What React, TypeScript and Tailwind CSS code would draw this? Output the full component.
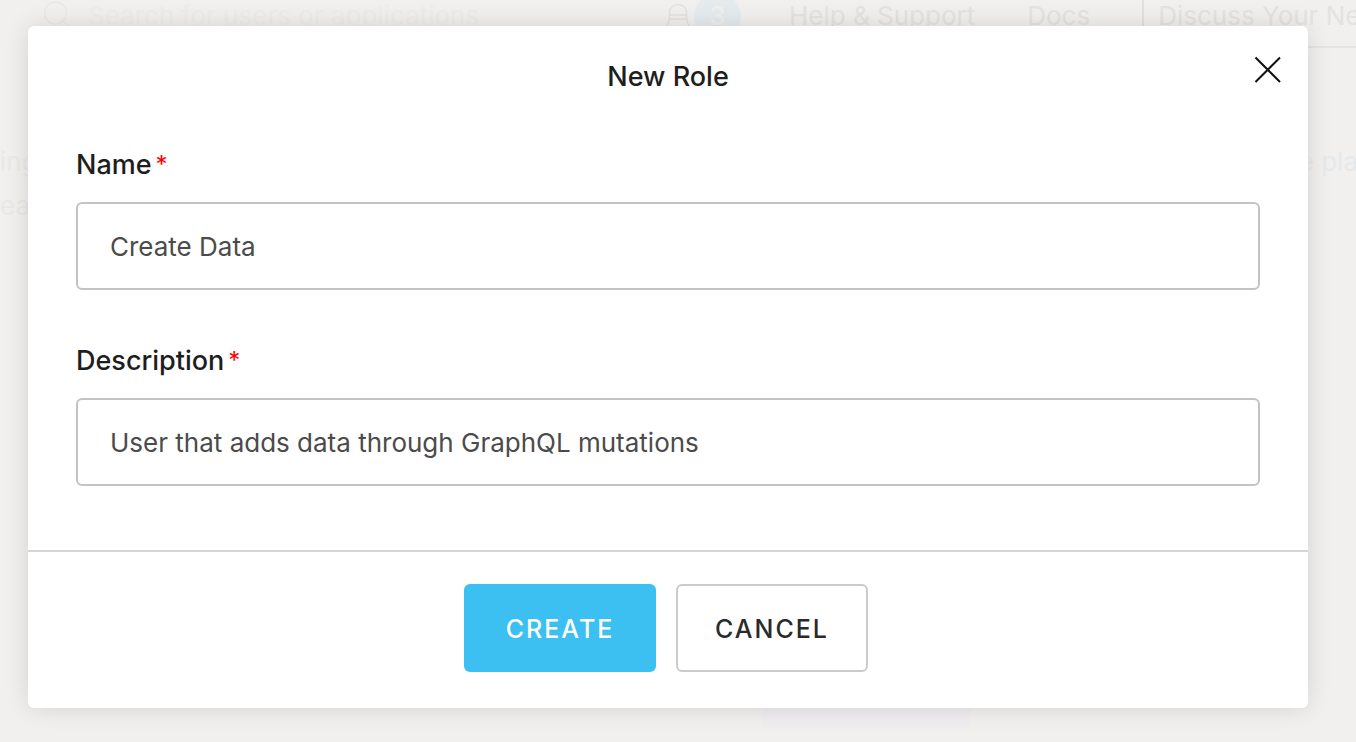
import { useState } from "react";

const navText = "text-[#e4e3e1] whitespace-nowrap";

function SearchIcon() {
  return (
    <svg className="size-8 shrink-0" viewBox="0 0 32 32" fill="none" stroke="#e9e8e6" strokeWidth="1.5" aria-hidden="true">
      <circle cx="15.500" cy="13" r="11" />
      <path d="M23 21l8 8" />
    </svg>
  );
}

function BellIcon() {
  return (
    <svg className="h-8 w-6 shrink-0" viewBox="0 0 24 32" fill="none" stroke="#e2e1df" strokeWidth="1.5" aria-hidden="true">
      <path d="M3.500 15v-3a8.500 7.500 0 0 1 17 0v3c0 5 0.500 8 3 11.500H0.500c2.500-3.500 3-6.500 3-11.500z" />
      <path d="M3.500 15h17M3.500 19h17" />
    </svg>
  );
}

function Header() {
  return (
    <header className="flex items-start">
      <div className="flex h-8 min-w-0 flex-1 items-center gap-4 pl-10">
        <SearchIcon />
        <input
          type="search"
          aria-label="Search for users or applications"
          placeholder="Search for users or applications"
          className="min-w-0 flex-1 bg-transparent placeholder:text-[#edecea] focus:outline-none"
        />
      </div>
      <nav className="flex h-12 w-[690px] shrink-0 items-start border-b-2 border-[#e5e4e2] leading-8">
        <button type="button" aria-label="Notifications" className="flex h-8 items-center gap-1">
          <BellIcon />
          <span className="flex size-[47px] items-center justify-center rounded-full bg-[#e5eaee] font-medium text-[#f0f0ef]">3</span>
        </button>
        <a href="#help" className={`ml-12 ${navText}`}>Help &amp; Support</a>
        <a href="#docs" className={`ml-[52px] ${navText}`}>Docs</a>
        <a href="#discuss" className={`ml-[52px] h-full border-l-2 border-[#e2e1df] pl-3.5 ${navText}`}>
          Discuss Your Ne
        </a>
      </nav>
    </header>
  );
}

type FieldProps = {
  id: string;
  label: string;
  value: string;
  onChange: (value: string) => void;
};

function Field({ id, label, value, onChange }: FieldProps) {
  return (
    <div>
      <label htmlFor={id} className="flex items-center gap-1 text-[27px] leading-[46px] font-medium text-[#1e1e1e]">
        {label}
        <span className="text-2xl leading-[46px] font-normal text-[#ff0000]">*</span>
      </label>
      <input
        id={id}
        type="text"
        required
        value={value}
        onChange={(event) => onChange(event.target.value)}
        className="mt-3.5 block h-[88px] w-full rounded-md border-2 border-[#c3c3c3] bg-white px-8 text-[#4b4b4b] focus:outline-none"
      />
    </div>
  );
}

export default function App() {
  const [name, setName] = useState("Create Data");
  const [description, setDescription] = useState("User that adds data through GraphQL mutations");

  return (
    <div className="relative min-h-screen overflow-hidden bg-[#f1f0ee] font-['Inter','Liberation_Sans',sans-serif] text-[26px] leading-11">
      <Header />
      <main className="pt-[92px]">
        <div className="flex justify-between text-[#e9e8e6]">
          <p>ing</p>
          <a href="#platform" className="-mr-0.5 text-[#e6e9ec]">e pla</a>
        </div>
        <p className="text-[#e9e8e6]">eas</p>
        <div className="flex justify-center pt-[400px] pl-[376px]">
          <div className="h-[100px] w-[208px] rounded-md bg-[#efedef]" />
        </div>
      </main>

      <div className="absolute inset-0 pt-[26px] pr-12 pl-7">
        <section
          role="dialog"
          aria-modal="true"
          aria-labelledby="dialog-title"
          className="rounded-md bg-white shadow-[0_0_24px_rgba(0,0,0,0.12)]"
        >
          <div className="grid grid-cols-[1fr_auto_1fr] items-start px-6 pt-7">
            <h1 id="dialog-title" className="col-start-2 text-[27px] leading-[46px] font-medium text-[#1e1e1e]">New Role</h1>
            <button type="button" aria-label="Close" className="flex size-8 items-center justify-center justify-self-end">
              <svg className="size-8" viewBox="0 0 32 32" fill="none" stroke="#111111" strokeWidth="2" aria-hidden="true">
                <path d="M3.500 3.500l24.500 24.500M28 3.500L3.500 28" />
              </svg>
            </button>
          </div>
          <form onSubmit={(event) => event.preventDefault()}>
            <div className="flex flex-col gap-12 px-12 pt-[42px] pb-16">
              <Field id="role-name" label="Name" value={name} onChange={setName} />
              <Field id="role-description" label="Description" value={description} onChange={setDescription} />
            </div>
            <div className="flex justify-center gap-5 border-t-2 border-[#d5d5d5] pt-8 pr-1 pb-9 text-[25px] font-medium tracking-[2px]">
              <button type="submit" className="h-[88px] w-48 rounded-md bg-[#3cc0f2] pt-0.5 text-white">CREATE</button>
              <button type="button" className="h-[88px] w-48 rounded-md border-2 border-[#cbcbcb] bg-white pt-0.5 text-[#2a2a2a]">
                CANCEL
              </button>
            </div>
          </form>
        </section>
      </div>
    </div>
  );
}
